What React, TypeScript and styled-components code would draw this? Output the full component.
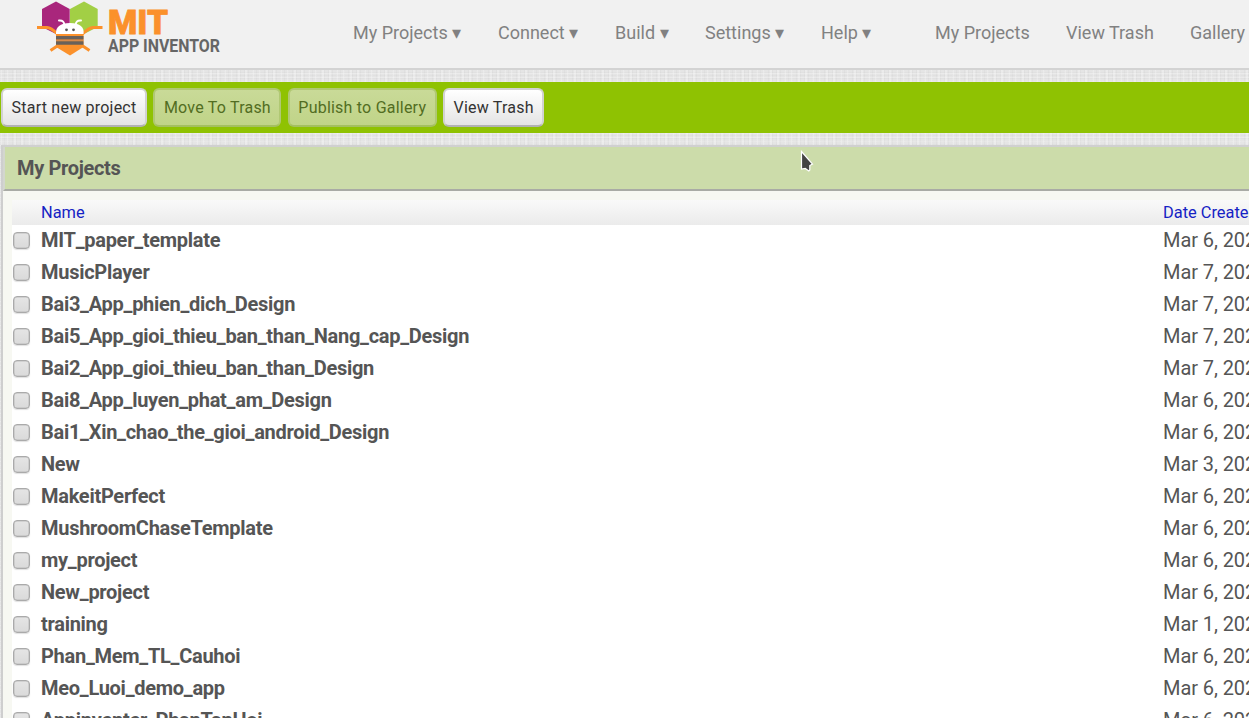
import React from "react";
import styled, { createGlobalStyle } from "styled-components";

const GlobalStyle = createGlobalStyle`
  html, body { margin: 0; height: 100%; overflow: hidden; }
  body { font-family: Roboto, "Liberation Sans", sans-serif; color: #555; }
  *, *::before, *::after { box-sizing: border-box; }
`;

const Page = styled.div`
  position: relative;
  display: flex;
  flex-direction: column;
  height: 718px;
  overflow: hidden;
  background-color: #e5e5e5;
  background-image:
    repeating-linear-gradient(0deg, rgba(255,255,255,.22) 0 1px, transparent 1px 4px),
    repeating-linear-gradient(90deg, rgba(0,0,0,.025) 0 1px, transparent 1px 4px),
    repeating-linear-gradient(90deg, rgba(255,255,255,.25) 0 2px, transparent 2px 7px),
    repeating-linear-gradient(0deg, rgba(0,0,0,.02) 0 1px, transparent 1px 3px);
`;

const Header = styled.header`
  display: flex;
  flex: none;
  height: 70px;
  background: #f1f1f1;
  border-bottom: 2px solid #d3d3d3;
  overflow: hidden;
`;

const LogoArea = styled.div`
  flex: none;
  width: 353px;
  padding-left: 36px;
  svg { display: block; }
`;

const Nav = styled.nav`
  display: flex;
  flex: none;
  height: 66px;
  align-items: center;
`;

const NavItem = styled.a<{ $width: number }>`
  flex: none;
  width: ${(p) => p.$width}px;
  font-size: 18px;
  line-height: 22px;
  color: #818181;
  white-space: nowrap;
`;

const Toolbar = styled.div`
  display: flex;
  flex: none;
  gap: 6.4px;
  height: 51px;
  margin-top: 12px;
  padding: 6px 1px;
  background: #8fc202;
`;

const ToolButton = styled.button<{ $width: number }>`
  flex: none;
  width: ${(p) => p.$width}px;
  height: 39px;
  padding: 0;
  border: 2px solid #d2d2d2;
  border-bottom-color: #b2b2b2;
  border-radius: 6px;
  background: linear-gradient(#fff, #e4e4e4);
  font: 16px Roboto, "Liberation Sans", sans-serif;
  letter-spacing: 0.22px;
  color: #333;
  white-space: nowrap;
  &:disabled {
    border-color: #b0c873;
    border-bottom-color: #a4bf61;
    background: linear-gradient(#c9da98, #c0d488);
    color: #526d22;
  }
`;

const Panel = styled.main`
  flex: none;
  height: 600px;
  margin: 12px 0 0 1px;
  border-top: 2px solid #d0d0d0;
  border-left: 2px solid #cecece;
  background: #f7f8f2;
`;

const PanelTitle = styled.h1`
  height: 44px;
  margin: 0;
  padding-left: 12px;
  border-left: 2px solid #d3d6ce;
  border-bottom: 2px solid #a9aba5;
  background: #ccdcaa;
  font-size: 20px;
  letter-spacing: -0.35px;
  font-weight: 700;
  line-height: 42px;
`;

const Table = styled.div`
  margin: 9px 0 0 9px;
  background: #fff;
`;

const columns = `
  display: grid;
  grid-template-columns: 29px 1122px 1fr;
  align-items: center;
  white-space: nowrap;
`;

const TableHead = styled.div`
  ${columns}
  height: 25px;
  background: linear-gradient(#f9f9f9, #ebebeb);
  font-size: 16.4px;
  color: #1522c4;
`;

const Row = styled.div`
  ${columns}
  height: 32px;
  font-size: 20px;
  line-height: 30px;
`;

const Name = styled.span`
  font-weight: 700;
  padding-bottom: 2px;
  letter-spacing: -0.28px;
`;

const DateCell = styled.span`
  padding-bottom: 2px;
  letter-spacing: -0.08px;
`;

const Check = styled.span`
  width: 17px;
  height: 17px;
  margin: 0 0 2px 1px;
  border: 1.5px solid #aaa;
  border-radius: 4px;
  background: linear-gradient(#e5e5e5, #dadada);
  box-shadow: inset 0 0 0 0.5px #bbb, 0 1px 1px rgba(0, 0, 0, 0.12);
`;

const Pointer = styled.svg`
  position: absolute;
  left: 800px;
  top: 150px;
`;

const menu: [string, number][] = [
  ["My Projects ▾", 145],
  ["Connect ▾", 117],
  ["Build ▾", 90],
  ["Settings ▾", 116],
  ["Help ▾", 114],
  ["My Projects", 131],
  ["View Trash", 124],
  ["Gallery", 80],
];

const projects: [string, string][] = [
  ["MIT_paper_template", "Mar 6, 2023"],
  ["MusicPlayer", "Mar 7, 2023"],
  ["Bai3_App_phien_dich_Design", "Mar 7, 2023"],
  ["Bai5_App_gioi_thieu_ban_than_Nang_cap_Design", "Mar 7, 2023"],
  ["Bai2_App_gioi_thieu_ban_than_Design", "Mar 7, 2023"],
  ["Bai8_App_luyen_phat_am_Design", "Mar 6, 2023"],
  ["Bai1_Xin_chao_the_gioi_android_Design", "Mar 6, 2023"],
  ["New", "Mar 3, 2023"],
  ["MakeitPerfect", "Mar 6, 2023"],
  ["MushroomChaseTemplate", "Mar 6, 2023"],
  ["my_project", "Mar 6, 2023"],
  ["New_project", "Mar 6, 2023"],
  ["training", "Mar 1, 2023"],
  ["Phan_Mem_TL_Cauhoi", "Mar 6, 2023"],
  ["Meo_Luoi_demo_app", "Mar 6, 2023"],
  ["Appinventer_PhanTanHoi", "Mar 6, 2023"],
];

function Logo() {
  return (
    <svg width="190" height="62" viewBox="36 0 190 62">
      <path d="M56 1.500 69.700 9v18L56 34 42 27V9Z" fill="#a9267c" />
      <path d="M84 1.500 97.700 9v18L84 34 70 27V9Z" fill="#a2cf45" />
      <path d="M42 28.500 56 38H84L98 28.500V36H42Z" fill="#f1f1f1" />
      <path d="M37 27.500H47Q51 27.500 58 34.500M102.500 27.500H93Q89 27.500 82 34.500M58 45.500l-7.500 5M82 45.500l7.500 5" fill="none" stroke="#fb912b" strokeWidth="3" />
      <path d="M56 32h27.500v15L70 55.500 56 47Z" fill="#fb912b" />
      <path d="M56 34c-.5-7 4-11 14-11s14.500 4 13.500 11Z" fill="#fff" />
      <path d="M64.500 26q0-6-5.500-5.500M75.500 26q0-6 5.500-5.500" fill="none" stroke="#fff" strokeWidth="2" strokeLinecap="round" />
      <circle cx="66.500" cy="29.800" r="1.400" fill="#555" />
      <circle cx="73.500" cy="29.800" r="1.400" fill="#555" />
      <path d="M56 37.800h27.500M56 43h27.500" stroke="#68615b" strokeWidth="3.400" />
      <path d="M56 40.400h27.500" stroke="#d78b4c" strokeWidth="1.200" />
      <text x="108" y="33.500" fontFamily="Roboto" fontWeight="900" fontSize="34" fill="#fb912b" stroke="#fb912b" strokeWidth="0.8" textLength="60" lengthAdjust="spacingAndGlyphs">MIT</text>
      <text x="108" y="51.500" fontFamily="Roboto" fontWeight="700" fontSize="18" fill="#666" textLength="112" lengthAdjust="spacingAndGlyphs">APP INVENTOR</text>
    </svg>
  );
}

export default function App() {
  return (
    <>
      <GlobalStyle />
      <Page>
        <Header>
          <LogoArea><Logo /></LogoArea>
          <Nav>
            {menu.map(([label, width]) => (
              <NavItem key={label} $width={width}>{label}</NavItem>
            ))}
          </Nav>
        </Header>
        <Toolbar>
          <ToolButton $width={146}>Start new project</ToolButton>
          <ToolButton $width={128} disabled>Move To Trash</ToolButton>
          <ToolButton $width={149} disabled>Publish to Gallery</ToolButton>
          <ToolButton $width={101}>View Trash</ToolButton>
        </Toolbar>
        <Panel>
          <PanelTitle>My Projects</PanelTitle>
          <Table>
            <TableHead>
              <span />
              <span>Name</span>
              <span>Date Created</span>
            </TableHead>
            {projects.map(([name, date]) => (
              <Row key={name}>
                <Check />
                <Name>{name}</Name>
                <DateCell>{date}</DateCell>
              </Row>
            ))}
          </Table>
        </Panel>
        <Pointer width="14" height="24" viewBox="0 0 14 24">
          <path d="M1.500 1.500 12.500 14 9.800 15.500V20L8.800 21 5.200 18.500 1.500 19Z" fill="#444" stroke="#fff" strokeWidth="1.200" />
        </Pointer>
      </Page>
    </>
  );
}
